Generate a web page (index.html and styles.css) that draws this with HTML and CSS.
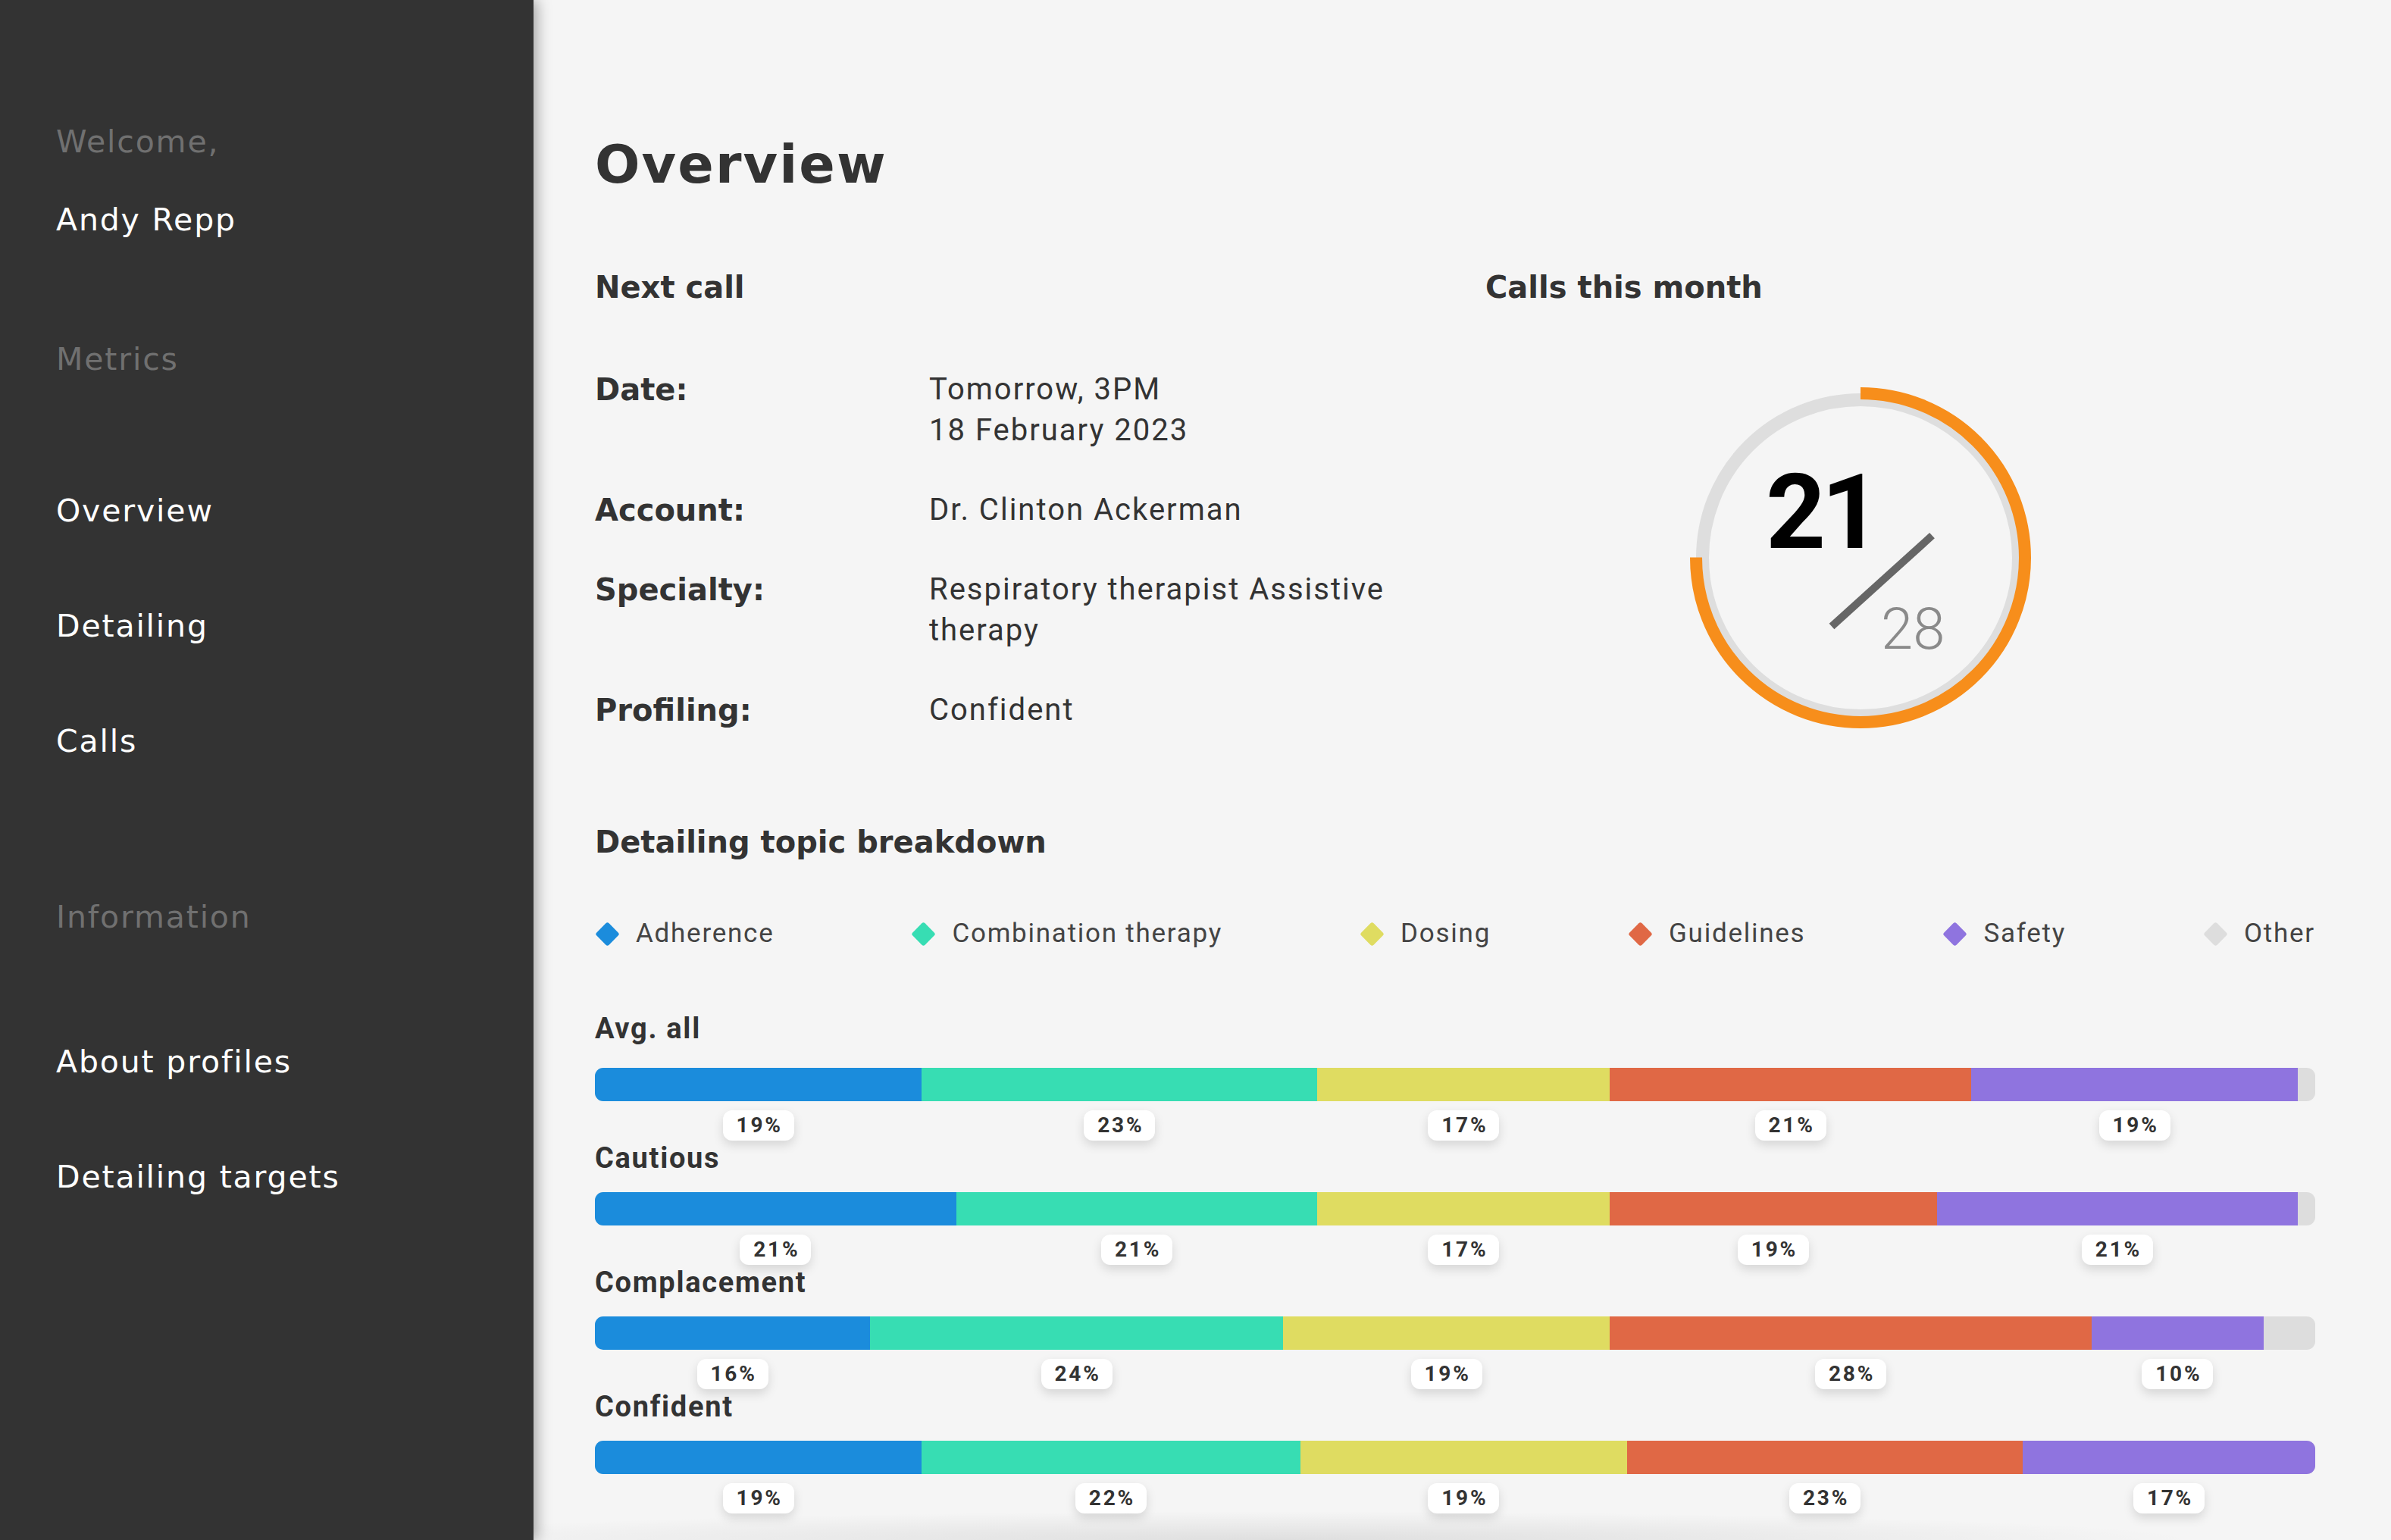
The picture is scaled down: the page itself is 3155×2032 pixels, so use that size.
FILE: index.html
```html
<!DOCTYPE html>
<html lang="en">
<head>
<meta charset="utf-8">
<title>Overview</title>
<link rel="stylesheet" href="styles.css">
</head>
<body>
<div class="app">
  <aside class="sidebar">
    <div class="side-muted">Welcome,</div>
    <div class="side-user">Andy Repp</div>
    <div class="side-muted side-section-metrics">Metrics</div>
    <nav class="side-nav side-nav-metrics">
      <a class="side-link">Overview</a>
      <a class="side-link">Detailing</a>
      <a class="side-link">Calls</a>
    </nav>
    <div class="side-muted side-section-info">Information</div>
    <nav class="side-nav side-nav-info">
      <a class="side-link">About profiles</a>
      <a class="side-link">Detailing targets</a>
    </nav>
  </aside>

  <main class="main">
    <h1 class="page-title">Overview</h1>

    <section class="top">
      <div class="next-call">
        <h2 class="section-title">Next call</h2>
        <dl class="details">
          <dt>Date:</dt><dd>Tomorrow, 3PM<br>18 February 2023</dd>
          <dt>Account:</dt><dd>Dr. Clinton Ackerman</dd>
          <dt>Specialty:</dt><dd>Respiratory therapist Assistive therapy</dd>
          <dt>Profiling:</dt><dd>Confident</dd>
        </dl>
      </div>
      <div class="calls-month">
        <h2 class="section-title">Calls this month</h2>
        <svg class="gauge" width="450" height="450" viewBox="0 0 450 450">
          <circle class="gauge-track" cx="225" cy="225" r="208.5"/>
          <circle class="gauge-value" cx="225" cy="225" r="217" stroke-dasharray="1022.6 2000" transform="rotate(-90 225 225)"/>
          <text class="gauge-num" x="100" y="211.5">21</text>
          <line class="gauge-slash" x1="187" y1="315.5" x2="319.5" y2="195.6"/>
          <text class="gauge-total" x="252" y="345">28</text>
        </svg>
      </div>
    </section>

    <section class="breakdown">
      <h2 class="section-title">Detailing topic breakdown</h2>
      <ul class="legend">
        <li class="legend-item"><span class="dot c-adh"></span>Adherence</li>
        <li class="legend-item"><span class="dot c-comb"></span>Combination therapy</li>
        <li class="legend-item"><span class="dot c-dos"></span>Dosing</li>
        <li class="legend-item"><span class="dot c-guid"></span>Guidelines</li>
        <li class="legend-item"><span class="dot c-saf"></span>Safety</li>
        <li class="legend-item"><span class="dot c-oth"></span>Other</li>
      </ul>

      <div class="rows">
        <div class="row row-first">
          <div class="row-label">Avg. all</div>
          <div class="track">
            <span class="fill c-adh" style="width:19%"></span>
            <span class="fill c-comb" style="width:23%"></span>
            <span class="fill c-dos" style="width:17%"></span>
            <span class="fill c-guid" style="width:21%"></span>
            <span class="fill c-saf" style="width:19%"></span>
          </div>
          <div class="pills">
            <span class="pill-cell" style="width:19%"><span class="pill">19%</span></span>
            <span class="pill-cell" style="width:23%"><span class="pill">23%</span></span>
            <span class="pill-cell" style="width:17%"><span class="pill">17%</span></span>
            <span class="pill-cell" style="width:21%"><span class="pill">21%</span></span>
            <span class="pill-cell" style="width:19%"><span class="pill">19%</span></span>
          </div>
        </div>

        <div class="row">
          <div class="row-label">Cautious</div>
          <div class="track">
            <span class="fill c-adh" style="width:21%"></span>
            <span class="fill c-comb" style="width:21%"></span>
            <span class="fill c-dos" style="width:17%"></span>
            <span class="fill c-guid" style="width:19%"></span>
            <span class="fill c-saf" style="width:21%"></span>
          </div>
          <div class="pills">
            <span class="pill-cell" style="width:21%"><span class="pill">21%</span></span>
            <span class="pill-cell" style="width:21%"><span class="pill">21%</span></span>
            <span class="pill-cell" style="width:17%"><span class="pill">17%</span></span>
            <span class="pill-cell" style="width:19%"><span class="pill">19%</span></span>
            <span class="pill-cell" style="width:21%"><span class="pill">21%</span></span>
          </div>
        </div>

        <div class="row">
          <div class="row-label">Complacement</div>
          <div class="track">
            <span class="fill c-adh" style="width:16%"></span>
            <span class="fill c-comb" style="width:24%"></span>
            <span class="fill c-dos" style="width:19%"></span>
            <span class="fill c-guid" style="width:28%"></span>
            <span class="fill c-saf" style="width:10%"></span>
          </div>
          <div class="pills">
            <span class="pill-cell" style="width:16%"><span class="pill">16%</span></span>
            <span class="pill-cell" style="width:24%"><span class="pill">24%</span></span>
            <span class="pill-cell" style="width:19%"><span class="pill">19%</span></span>
            <span class="pill-cell" style="width:28%"><span class="pill">28%</span></span>
            <span class="pill-cell" style="width:10%"><span class="pill">10%</span></span>
          </div>
        </div>

        <div class="row">
          <div class="row-label">Confident</div>
          <div class="track">
            <span class="fill c-adh" style="width:19%"></span>
            <span class="fill c-comb" style="width:22%"></span>
            <span class="fill c-dos" style="width:19%"></span>
            <span class="fill c-guid" style="width:23%"></span>
            <span class="fill c-saf" style="width:17%"></span>
          </div>
          <div class="pills">
            <span class="pill-cell" style="width:19%"><span class="pill">19%</span></span>
            <span class="pill-cell" style="width:22%"><span class="pill">22%</span></span>
            <span class="pill-cell" style="width:19%"><span class="pill">19%</span></span>
            <span class="pill-cell" style="width:23%"><span class="pill">23%</span></span>
            <span class="pill-cell" style="width:17%"><span class="pill">17%</span></span>
          </div>
        </div>
      </div>
    </section>
  </main>
</div>
</body>
</html>
```

FILE: styles.css
```css
* { box-sizing: border-box; }

html, body {
  margin: 0;
  padding: 0;
  height: 100%;
}

body {
  background: #f5f5f5;
  color: #333333;
  font-family: "Roboto", "Liberation Sans", sans-serif;
  overflow: hidden;
}

.app {
  display: flex;
  height: 100vh;
}

/* ---------- Sidebar ---------- */
.sidebar {
  width: 704px;
  flex: 0 0 704px;
  background: #333333;
  padding: 162px 0 0 74px;
  font-family: "DejaVu Sans", "Liberation Sans", sans-serif;
  font-size: 41px;
  line-height: 50px;
  letter-spacing: 0.045em;
  box-shadow: 4px 0 18px rgba(0, 0, 0, 0.35);
  position: relative;
  z-index: 2;
}

.side-muted {
  color: #707070;
}

.side-user {
  color: #ffffff;
  margin-top: 53px;
}

.side-section-metrics {
  margin-top: 134px;
}

.side-section-info {
  margin-top: 182px;
}

.side-nav {
  display: flex;
  flex-direction: column;
  gap: 102px;
}

.side-nav-metrics {
  margin-top: 150px;
}

.side-nav-info {
  margin-top: 141px;
}

.side-link {
  color: #ffffff;
  text-decoration: none;
  display: block;
}

/* ---------- Main ---------- */
.main {
  flex: 1;
  position: relative;
  padding: 177px 100px 0 81px;
  overflow: hidden;
}

.main::after {
  content: "";
  position: absolute;
  left: 0;
  bottom: 0;
  width: 2200px;
  height: 38px;
  background: radial-gradient(ellipse 55% 100% at 45% 100%, rgba(0, 0, 0, 0.09), rgba(0, 0, 0, 0) 100%);
  pointer-events: none;
}

.page-title {
  margin: 0;
  font-family: "DejaVu Sans", "Liberation Sans", sans-serif;
  font-weight: 700;
  font-size: 70px;
  line-height: 80px;
  letter-spacing: 0.03em;
  color: #333333;
}

.section-title {
  margin: 0;
  font-family: "DejaVu Sans", "Liberation Sans", sans-serif;
  font-weight: 700;
  font-size: 40px;
  line-height: 48px;
  color: #333333;
}

.top {
  margin-top: 98px;
  display: grid;
  grid-template-columns: 1175px 1fr;
}

.details {
  margin: 84px 0 0 0;
  display: grid;
  grid-template-columns: 441px 680px;
  row-gap: 51px;
}

.details dt {
  font-family: "DejaVu Sans", "Liberation Sans", sans-serif;
  font-weight: 700;
  font-size: 40px;
  line-height: 54px;
  color: #333333;
}

.details dd {
  margin: 0;
  font-family: "Roboto", "Liberation Sans", sans-serif;
  font-size: 40px;
  line-height: 54px;
  letter-spacing: 0.05em;
  color: #333333;
}

.gauge {
  display: block;
  margin: 108px 0 0 270px;
  overflow: visible;
}

.gauge-track {
  fill: none;
  stroke: #dedede;
  stroke-width: 17;
}

.gauge-value {
  fill: none;
  stroke: #f78e1b;
  stroke-width: 16;
}

.gauge-num {
  font-family: "Roboto", "Liberation Sans", sans-serif;
  font-weight: 700;
  font-size: 138px;
  letter-spacing: -6px;
  fill: #000000;
}

.gauge-total {
  font-family: "Roboto", "Liberation Sans", sans-serif;
  font-weight: 300;
  font-size: 76px;
  fill: #8a8a8a;
}

.gauge-slash {
  stroke: #666666;
  stroke-width: 10;
}

/* ---------- Breakdown ---------- */
.breakdown {
  margin-top: 123px;
}

.legend {
  list-style: none;
  margin: 75px 0 0 0;
  padding: 0;
  display: flex;
  justify-content: space-between;
  font-family: "Roboto", "Liberation Sans", sans-serif;
  font-size: 35px;
  line-height: 44px;
  letter-spacing: 0.05em;
  color: #444444;
}

.legend-item {
  display: flex;
  align-items: center;
}

.dot {
  width: 23px;
  height: 23px;
  border-radius: 3px;
  transform: rotate(45deg);
  margin: 0 26px 0 5px;
  flex: 0 0 23px;
}

.c-adh { background: #1b8cdc; }
.c-comb { background: #37ddb3; }
.c-dos { background: #dfdc61; }
.c-guid { background: #e06845; }
.c-saf { background: #8f74df; }
.c-oth { background: #dddddd; }

.rows {
  margin-top: 80px;
}

.row-label {
  font-family: "Roboto", "Liberation Sans", sans-serif;
  font-weight: 700;
  font-size: 38px;
  line-height: 46px;
  letter-spacing: 0.045em;
  color: #333333;
}

.track {
  margin-top: 22px;
  height: 44px;
  border-radius: 11px;
  background: #dddddd;
  display: flex;
  overflow: hidden;
}

.row-first .track {
  margin-top: 29px;
}

.fill {
  display: block;
  height: 100%;
}

.pills {
  display: flex;
  margin-top: 12px;
}

.pill-cell {
  display: flex;
  justify-content: center;
}

.pill {
  display: block;
  width: 94px;
  height: 40px;
  line-height: 40px;
  text-align: center;
  padding-left: 3px;
  background: #ffffff;
  border-radius: 12px;
  box-shadow: 0 6px 14px rgba(0, 0, 0, 0.13);
  font-family: "Roboto", "Liberation Sans", sans-serif;
  font-weight: 700;
  font-size: 28px;
  letter-spacing: 0.1em;
  color: #333333;
}
```
